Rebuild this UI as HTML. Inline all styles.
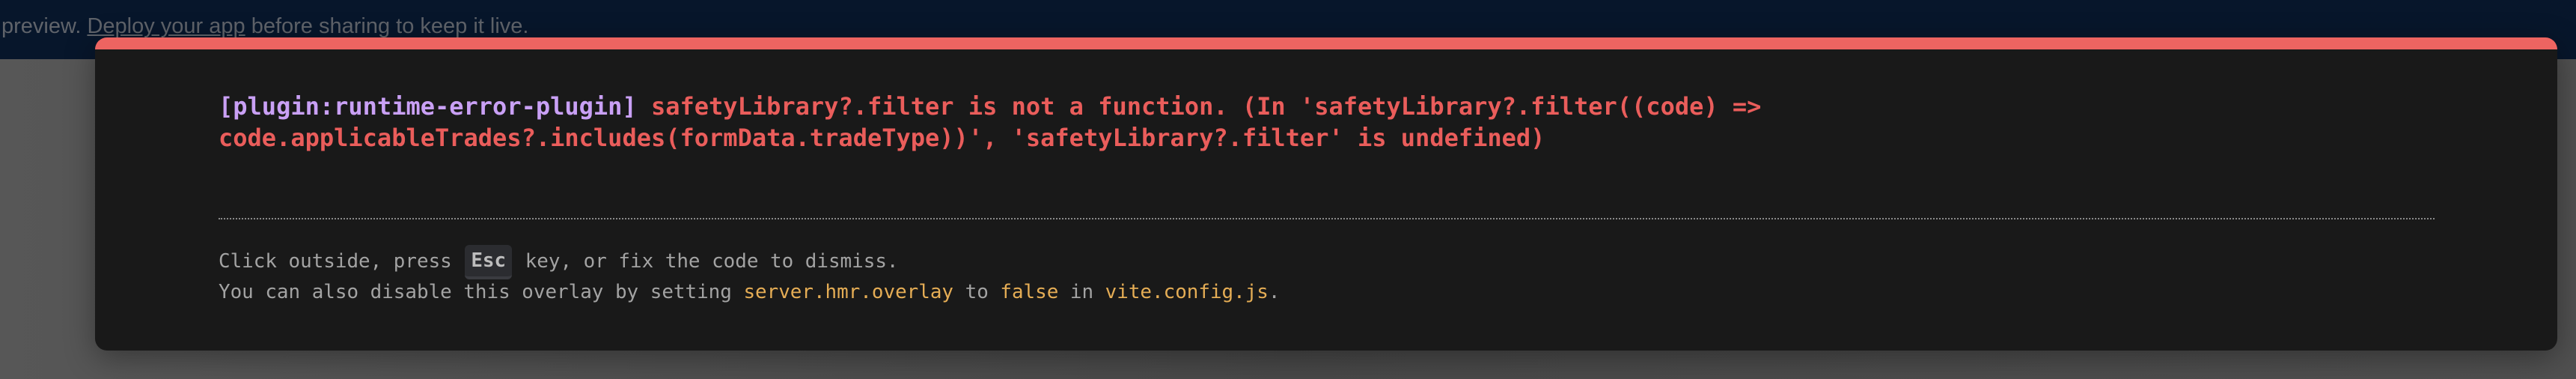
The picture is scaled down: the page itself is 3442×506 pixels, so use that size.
<!DOCTYPE html>
<html><head><meta charset="utf-8"><style>
html,body{margin:0;padding:0;width:3442px;height:506px;overflow:hidden;}
body{background:linear-gradient(90deg,#575757 0%,#484848 50%,#505050 100%);position:relative;font-family:"Liberation Sans",sans-serif;}
.top{position:absolute;left:0;top:0;width:3442px;height:79px;background:#07162b;}
.top span{position:absolute;left:2px;top:19px;font-size:29px;color:#5f636a;white-space:nowrap;}
.top u{text-decoration:underline;}
.card{position:absolute;left:127px;top:50px;width:3290px;height:418px;background:#191919;border-radius:16px;border-top:16px solid #ed6461;box-sizing:border-box;box-shadow:0 10px 40px rgba(0,0,0,.35);}
.msg{position:absolute;left:165px;top:55px;margin:0;font-family:"DejaVu Sans Mono","Liberation Mono",monospace;font-weight:bold;font-size:32px;line-height:42px;color:#ea5d5b;white-space:pre;}
.p{color:#c9a0f5;}
.sep{position:absolute;left:165px;top:225px;width:2961px;border-top:2px dotted #8a8a8a;}
.ft{position:absolute;left:165px;font-family:"DejaVu Sans Mono","Liberation Mono",monospace;font-size:25.9px;color:#a3a3a3;white-space:pre;line-height:30px;}
.y{color:#e5ad55;}
kbd{display:inline-block;font-family:inherit;font-weight:bold;background:#2b2c30;border-radius:6px;padding:6px 8px;line-height:30px;color:#bdbdbd;border-bottom:4px solid #3a3b40;margin:0 2px;position:relative;top:-1px;}
</style></head><body>
<div class="top"><span>preview. <u>Deploy your app</u> before sharing to keep it live.</span></div>
<div class="card">
<pre class="msg"><span class="p">[plugin:runtime-error-plugin]</span> safetyLibrary?.filter is not a function. (In 'safetyLibrary?.filter((code) =&gt;
code.applicableTrades?.includes(formData.tradeType))', 'safetyLibrary?.filter' is undefined)</pre>
<div class="sep"></div>
<div class="ft" style="top:262px">Click outside, press <kbd>Esc</kbd> key, or fix the code to dismiss.</div>
<div class="ft" style="top:309px">You can also disable this overlay by setting <span class="y">server.hmr.overlay</span> to <span class="y">false</span> in <span class="y">vite.config.js</span>.</div>
</div>
</body></html>
